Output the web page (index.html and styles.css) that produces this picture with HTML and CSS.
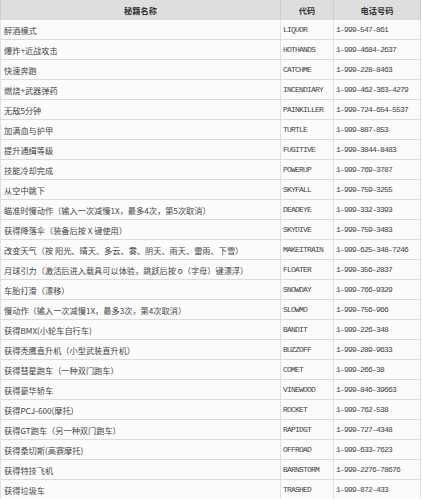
FILE: index.html
```html
<!DOCTYPE html>
<html lang="zh-CN">
<head>
<meta charset="utf-8">
<title>秘籍</title>
<link rel="stylesheet" href="styles.css">
</head>
<body>
<table class="cheats">
  <colgroup>
    <col class="c-name">
    <col class="c-code">
    <col class="c-phone">
  </colgroup>
  <thead>
    <tr><th>秘籍名称</th><th>代码</th><th>电话号码</th></tr>
  </thead>
  <tbody>
    <tr><td>醉酒模式</td><td class="mono">LIQUOR</td><td class="mono">1-999-547-861</td></tr>
    <tr><td>爆炸+近战攻击</td><td class="mono">HOTHANDS</td><td class="mono">1-999-4684-2637</td></tr>
    <tr><td>快速奔跑</td><td class="mono">CATCHME</td><td class="mono">1-999-228-8463</td></tr>
    <tr><td>燃烧+武器弹药</td><td class="mono">INCENDIARY</td><td class="mono">1-999-462-363-4279</td></tr>
    <tr><td>无敌5分钟</td><td class="mono">PAINKILLER</td><td class="mono">1-999-724-654-5537</td></tr>
    <tr><td>加满血与护甲</td><td class="mono">TURTLE</td><td class="mono">1-999-887-853</td></tr>
    <tr><td>提升通缉等级</td><td class="mono">FUGITIVE</td><td class="mono">1-999-3844-8483</td></tr>
    <tr><td>技能冷却完成</td><td class="mono">POWERUP</td><td class="mono">1-999-769-3787</td></tr>
    <tr><td>从空中跳下</td><td class="mono">SKYFALL</td><td class="mono">1-999-759-3255</td></tr>
    <tr><td>瞄准时慢动作（输入一次减慢1X，最多4次，第5次取消）</td><td class="mono">DEADEYE</td><td class="mono">1-999-332-3393</td></tr>
    <tr><td>获得降落伞（装备后按 X 键使用）</td><td class="mono">SKYDIVE</td><td class="mono">1-999-759-3483</td></tr>
    <tr><td>改变天气（按 阳光、晴天、多云、雾、阴天、雨天、雷雨、下雪）</td><td class="mono">MAKEITRAIN</td><td class="mono">1-999-625-348-7246</td></tr>
    <tr><td>月球引力（激活后进入载具可以体验，跳跃后按 o（字母）键漂浮）</td><td class="mono">FLOATER</td><td class="mono">1-999-356-2837</td></tr>
    <tr><td>车胎打滑（漂移）</td><td class="mono">SNOWDAY</td><td class="mono">1-999-766-9329</td></tr>
    <tr><td>慢动作（输入一次减慢1X，最多3次，第4次取消）</td><td class="mono">SLOWMO</td><td class="mono">1-999-756-966</td></tr>
    <tr><td>获得BMX(小轮车自行车)</td><td class="mono">BANDIT</td><td class="mono">1-999-226-348</td></tr>
    <tr><td>获得秃鹰直升机（小型武装直升机）</td><td class="mono">BUZZOFF</td><td class="mono">1-999-289-9633</td></tr>
    <tr><td>获得彗星跑车（一种双门跑车）</td><td class="mono">COMET</td><td class="mono">1-999-266-38</td></tr>
    <tr><td>获得豪华轿车</td><td class="mono">VINEWOOD</td><td class="mono">1-999-846-39663</td></tr>
    <tr><td>获得PCJ-600(摩托)</td><td class="mono">ROCKET</td><td class="mono">1-999-762-538</td></tr>
    <tr><td>获得GT跑车（另一种双门跑车）</td><td class="mono">RAPIDGT</td><td class="mono">1-999-727-4348</td></tr>
    <tr><td>获得桑切斯(高赛摩托)</td><td class="mono">OFFROAD</td><td class="mono">1-999-633-7623</td></tr>
    <tr><td>获得特技飞机</td><td class="mono">BARNSTORM</td><td class="mono">1-999-2276-78676</td></tr>
    <tr><td>获得垃圾车</td><td class="mono">TRASHED</td><td class="mono">1-999-872-433</td></tr>
  </tbody>
</table>
</body>
</html>
```
FILE: styles.css
```css
html, body {
  margin: 0;
  padding: 0;
  background: #ffffff;
}

.cheats {
  border-collapse: collapse;
  table-layout: fixed;
  width: 420px;
  font-family: "Noto Sans CJK SC", "Noto Sans", sans-serif;
  font-size: 8.2px;
  color: #444444;
}

.c-name { width: 280px; }
.c-code { width: 53px; }
.c-phone { width: 87px; }

.cheats th {
  height: 19px;
  padding: 0;
  background: #dedede;
  font-weight: bold;
  text-align: center;
  color: #333333;
  border-right: 1px solid #cfcfcf;
  border-left: 1px solid #cfcfcf;
}

.cheats td {
  height: 19px;
  padding: 0 0 0 3px;
  white-space: nowrap;
  overflow: hidden;
  border-top: 1px solid #dcdcdc;
  border-left: 1px solid #e2e2e2;
  border-right: 1px solid #e2e2e2;
  vertical-align: middle;
  background: #fcfcfc;
}

.cheats .mono {
  padding-left: 2px;
  font-family: "Liberation Mono", "DejaVu Sans Mono", monospace;
  font-size: 8px;
  letter-spacing: -0.8px;
  color: #444444;
}
```
